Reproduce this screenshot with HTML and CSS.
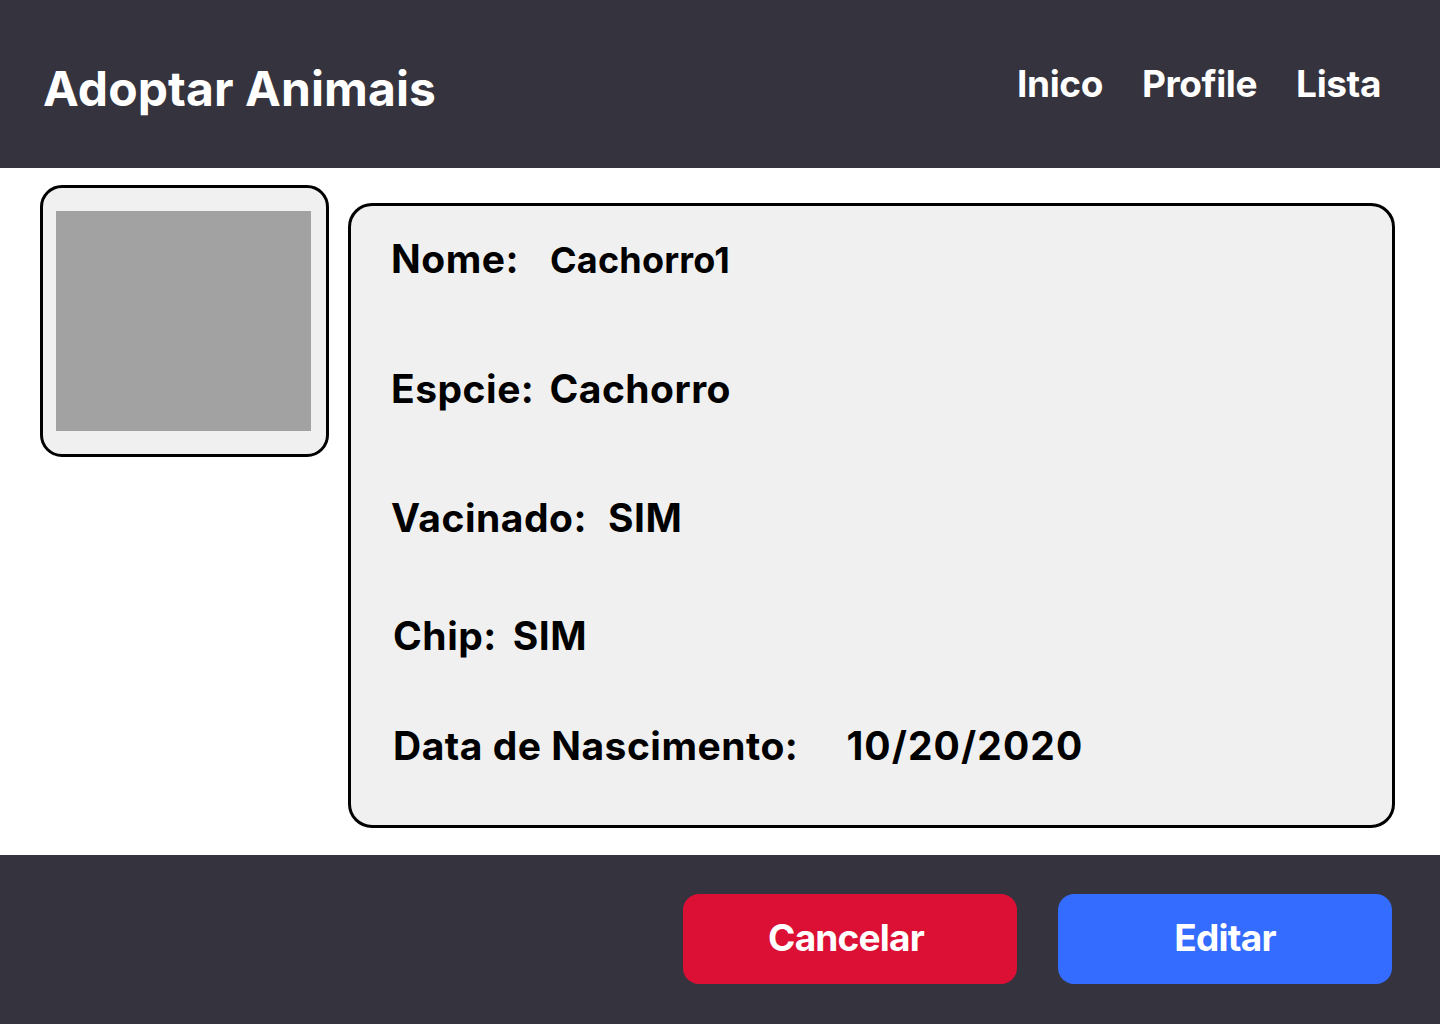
FILE: index.html
```html
<!DOCTYPE html>
<html lang="pt">
<head>
<meta charset="utf-8">
<title>Adoptar Animais</title>
<link rel="stylesheet" href="styles.css">
</head>
<body>
<header class="topbar">
  <h1 class="brand">Adoptar Animais</h1>
  <nav class="nav">
    <a class="nav-link" href="#">Inico</a>
    <a class="nav-link" href="#">Profile</a>
    <a class="nav-link" href="#">Lista</a>
  </nav>
</header>
<main class="content">
  <div class="photo-card"><div class="photo"></div></div>
  <section class="info-card">
    <div class="row row-nome"><span class="label">Nome:</span><span class="value small">Cachorro1</span></div>
    <div class="row row-especie"><span class="label">Espcie:</span><span class="value">Cachorro</span></div>
    <div class="row row-vacinado"><span class="label">Vacinado:</span><span class="value">SIM</span></div>
    <div class="row row-chip"><span class="label">Chip:</span><span class="value">SIM</span></div>
    <div class="row row-data"><span class="label">Data de Nascimento:</span><span class="value">10/20/2020</span></div>
  </section>
</main>
<footer class="bottombar">
  <button class="btn btn-cancel">Cancelar</button>
  <button class="btn btn-edit">Editar</button>
</footer>
</body>
</html>
```
FILE: styles.css
```css
* { box-sizing: border-box; }
html, body { margin: 0; padding: 0; }
body {
  width: 1440px;
  height: 1024px;
  font-family: Inter, "Noto Sans", sans-serif;
  font-weight: 700;
  background: #ffffff;
  color: #000;
  overflow: hidden;
}
.topbar {
  height: 168px;
  background: #35333d;
  display: flex;
  align-items: center;
  justify-content: space-between;
  padding: 0 59px 0 43px;
}
.brand {
  margin: 0;
  color: #fff;
  font-size: 48px;
  font-weight: 700;
  letter-spacing: 0.1px;
  padding-top: 8px;
}
.nav {
  display: flex;
  gap: 39px;
  padding-bottom: 2px;
}
.nav-link {
  color: #fff;
  text-decoration: none;
  font-size: 37px;
  letter-spacing: -0.4px;
}
.content {
  height: 687px;
  display: flex;
  align-items: flex-start;
  padding-left: 40px;
}
.photo-card {
  margin-top: 17px;
  width: 289px;
  height: 272px;
  background: #f0f0f0;
  border: 3px solid #000;
  border-radius: 22px;
  padding: 23px 14px 0 13px;
}
.photo {
  width: 255px;
  height: 220px;
  background: #a2a2a2;
}
.info-card {
  margin-top: 35px;
  margin-left: 19px;
  width: 1047px;
  height: 625px;
  background: #f0f0f0;
  border: 3px solid #000;
  border-radius: 24px;
  padding: 31px 0 0 40px;
  display: flex;
  flex-direction: column;
}
.row {
  display: flex;
  align-items: baseline;
  font-size: 39px;
  letter-spacing: 0.5px;
  line-height: 44px;
}
.row-especie { margin-top: 85px; }
.row-vacinado { margin-top: 85px; }
.row-chip { margin-top: 74px; }
.row-chip, .row-data { padding-left: 2px; }
.row-data { margin-top: 66px; }
.value.small { font-size: 36px; letter-spacing: 0.2px; }
.row-nome .value { margin-left: 31px; }
.row-especie .value { margin-left: 15px; }
.row-vacinado .value { margin-left: 21px; }
.row-chip .value { margin-left: 16px; }
.row-data .value { margin-left: 48px; letter-spacing: 1.1px; }
.bottombar {
  height: 169px;
  background: #35333d;
  display: flex;
  justify-content: flex-end;
  align-items: center;
  gap: 41px;
  padding: 0 48px 2px 0;
}
.btn {
  width: 334px;
  height: 90px;
  border: none;
  border-radius: 16px;
  color: #fff;
  font-family: Inter, "Noto Sans", sans-serif;
  font-weight: 700;
  font-size: 37px;
  letter-spacing: -0.8px;
  padding: 0 8px 2px 0;
  cursor: pointer;
}
.btn-cancel { background: #dc1035; }
.btn-edit { background: #336cff; padding-right: 0; }
```
